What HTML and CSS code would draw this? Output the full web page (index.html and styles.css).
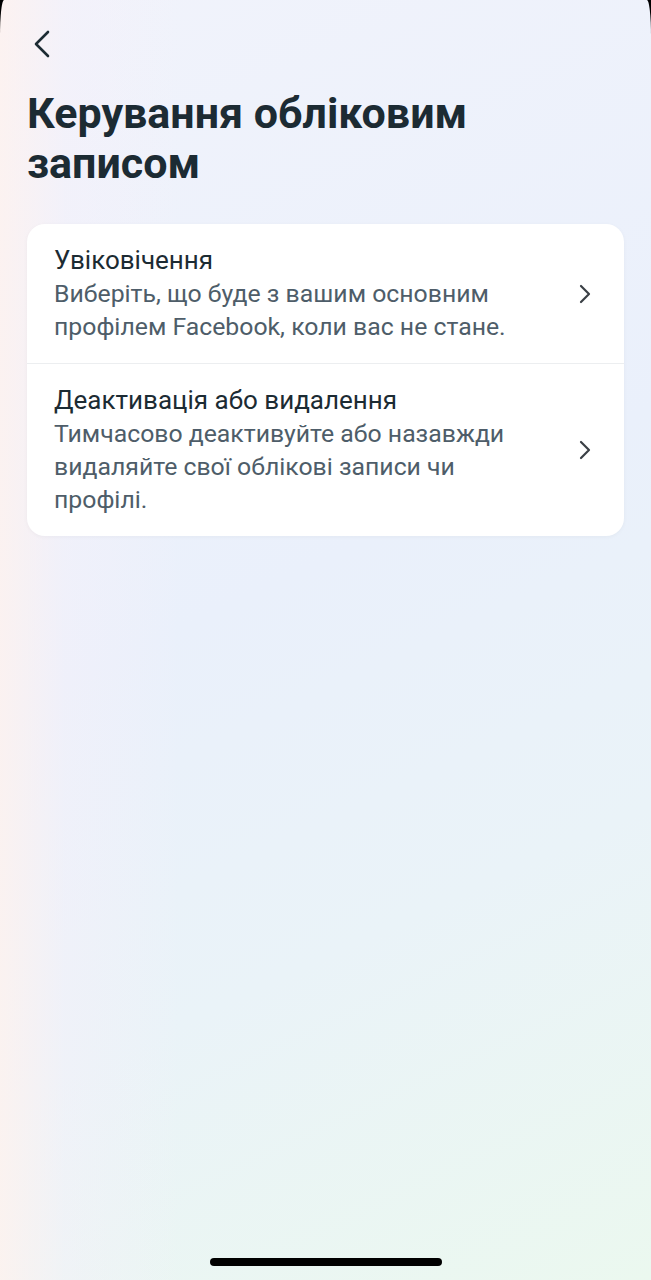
FILE: index.html
```html
<!DOCTYPE html>
<html lang="uk">
<head>
  <meta charset="UTF-8" />
  <meta name="viewport" content="width=device-width, initial-scale=1.0"/>
  <title>Керування обліковим записом</title>
  <link rel="stylesheet" href="styles.css">
</head>
<body>
  <div class="screen">
    <!-- back button -->
    <button class="back-btn" aria-label="Назад">
      <svg width="18" height="28" viewBox="0 0 18 28">
        <path d="M15 2 L3 14 L15 26" fill="none" stroke="#1c2b33" stroke-width="2.6" stroke-linecap="round" stroke-linejoin="round"/>
      </svg>
    </button>

    <h1 class="page-title">Керування обліковим записом</h1>

    <!-- settings list -->
    <div class="card">
      <a class="row" href="#">
        <div class="row-text">
          <p class="row-title">Увіковічення</p>
          <p class="row-sub">Виберіть, що буде з вашим основним профілем Facebook, коли вас не стане.</p>
        </div>
        <svg class="chevron" width="14" height="20" viewBox="0 0 14 20">
          <path d="M3 2 L11 10 L3 18" fill="none" stroke="#3a3f45" stroke-width="2.2" stroke-linecap="round" stroke-linejoin="round"/>
        </svg>
      </a>
      <a class="row" href="#">
        <div class="row-text">
          <p class="row-title">Деактивація або видалення</p>
          <p class="row-sub">Тимчасово деактивуйте або назавжди видаляйте свої облікові записи чи профілі.</p>
        </div>
        <svg class="chevron" width="14" height="20" viewBox="0 0 14 20">
          <path d="M3 2 L11 10 L3 18" fill="none" stroke="#3a3f45" stroke-width="2.2" stroke-linecap="round" stroke-linejoin="round"/>
        </svg>
      </a>
    </div>

    <div class="home-bar"></div>
  </div>
</body>
</html>
```

FILE: styles.css
```css
html, body {
  margin: 0;
  padding: 0;
  background-color: #000;
}

body {
  font-family: Roboto, "Noto Sans", Arial, sans-serif;
  color: #1c2b33;
}

.screen {
  height: 1280px;
  box-sizing: border-box;
  padding: 30px 27px 0 27px;
  display: flex;
  flex-direction: column;
  border-top-left-radius: 4px 36px;
  border-top-right-radius: 4px 36px;
  background:
    linear-gradient(to right, rgba(255, 242, 238, 0.8) 0%, rgba(247, 240, 249, 0.4) 10%, rgba(240, 240, 250, 0) 28%),
    linear-gradient(155deg, #f1f3fb 0%, #eaf0fb 45%, #eaf3f8 70%, #ebf8ef 100%);
}

.back-btn {
  align-self: flex-start;
  background: none;
  border: none;
  padding: 0;
  margin-left: 4px;
  width: 22px;
  height: 28px;
  cursor: pointer;
}

.page-title {
  margin: 30px 0 0 0;
  font-size: 43px;
  font-weight: 700;
  line-height: 50px;
  color: #1c2b33;
  max-width: 500px;
}

.card {
  margin-top: 36px;
  background-color: #ffffff;
  border-radius: 18px;
  box-shadow: 0 1px 4px rgba(0, 0, 0, 0.04);
}

.row {
  display: flex;
  align-items: center;
  padding: 20px 32px 20px 27px;
  text-decoration: none;
  color: inherit;
}

.row + .row {
  border-top: 1px solid #eceef0;
}

.row-text {
  flex: 1;
}

.row-title {
  margin: 0;
  font-size: 26px;
  line-height: 33px;
  color: #1c2b33;
}

.row-sub {
  margin: 0;
  font-size: 24.8px;
  line-height: 33px;
  color: #4e5d69;
  max-width: 480px;
}

.chevron {
  flex-shrink: 0;
  margin-left: 20px;
}

.home-bar {
  margin: auto auto 14px auto;
  width: 232px;
  height: 8px;
  border-radius: 4px;
  background-color: #000;
}
```
